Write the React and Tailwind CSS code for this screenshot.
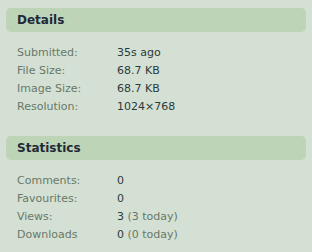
import React from 'react';

const details = [
  ['Submitted:', '35s ago'],
  ['File Size:', '68.7 KB'],
  ['Image Size:', '68.7 KB'],
  ['Resolution:', '1024×768'],
];

const stats = [
  ['Comments:', '0'],
  ['Favourites:', '0'],
  ['Views:', '3', '(3 today)'],
  ['Downloads', '0', '(0 today)'],
];

const Section = ({ title, rows, className = '' }) => (
  <section className={className}>
    <h2 className="h-6 rounded-[5px] bg-[#bdd4b7] px-[11px] text-[12px] font-bold leading-6 text-[#1f2a38]">
      {title}
    </h2>
    <dl className="mt-3 grid grid-cols-[100px_1fr] pl-[11px] text-[11px] leading-[18px]">
      {rows.map(([label, value, note]) => (
        <React.Fragment key={label}>
          <dt className="text-[#687868]">{label}</dt>
          <dd className="text-[#2c3a3a]">
            {value}
            {note && <span className="text-[#687868]"> {note}</span>}
          </dd>
        </React.Fragment>
      ))}
    </dl>
  </section>
);

export default function App() {
  return (
    <div className="h-[252px] w-[312px] overflow-hidden bg-[#d4e0d4] px-[6px] pt-2 font-['DejaVu_Sans',Verdana,sans-serif]">
      <Section title="Details" rows={details} />
      <Section title="Statistics" rows={stats} className="mt-5" />
    </div>
  );
}
